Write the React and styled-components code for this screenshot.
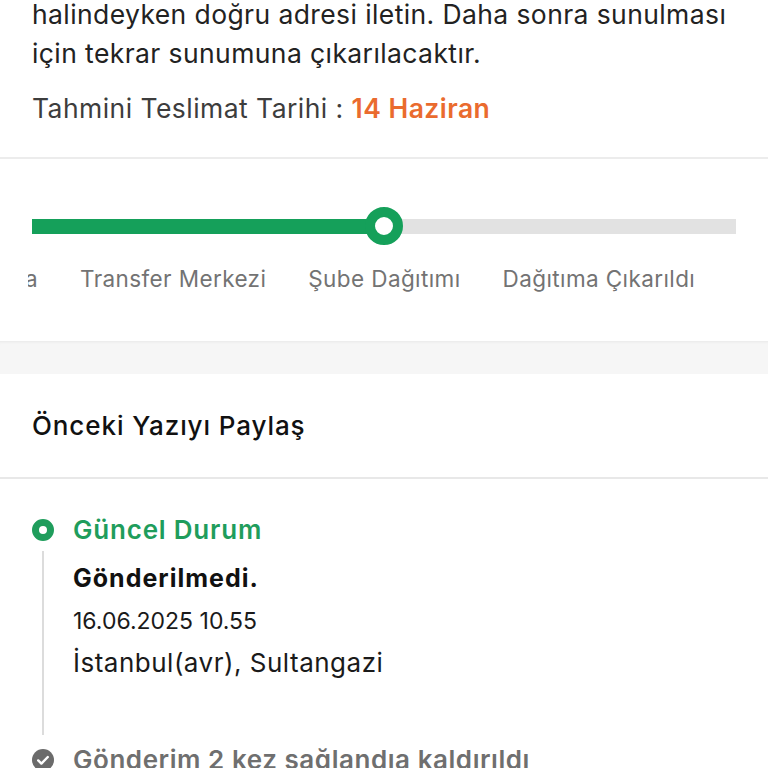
import React from 'react';
import styled, { createGlobalStyle } from 'styled-components';

const GlobalStyle = createGlobalStyle`
    html, body {
        margin: 0;
        padding: 0;
        background: #ffffff;
    }
    body {
        height: 768px;
        font-family: Inter, "Noto Sans", sans-serif;
        overflow: hidden;
    }
`

const Page = styled.div`
    display: flex;
    flex-direction: column;
    width: 768px;
    & > * {
        flex-shrink: 0;
    }
`

const InfoCard = styled.section`
    padding: 0 32px 29px;
    border-bottom: 2px solid #ececec;
`

const Notice = styled.p`
    margin: -5px 0 0;
    font-size: 26.5px;
    line-height: 39px;
    letter-spacing: 0.4px;
    color: #222222;
`

const Estimate = styled.p`
    margin: 16px 0 0;
    font-size: 26.5px;
    line-height: 39px;
    letter-spacing: 0.45px;
    color: #3d3d3d;
`

const EstimateDate = styled.span`
    color: #ea6b2e;
    font-weight: 600;
`

const TrackerCard = styled.section`
    padding: 47px 0 48px;
`

const TrackRow = styled.div`
    display: flex;
    align-items: center;
    height: 40px;
    padding: 0 32px;
`

const Filled = styled.div`
    flex: 0 0 ${p => p.$width}px;
    height: 15px;
    background: #15a05a;
`

const Ring = styled.div`
    flex: 0 0 38px;
    height: 38px;
    margin: 0 -19px;
    box-sizing: border-box;
    border: 10px solid #15a05a;
    border-radius: 50%;
    background: #ffffff;
    z-index: 1;
`

const Rest = styled.div`
    flex: 1;
    height: 15px;
    background: #e2e2e2;
`

const Labels = styled.div`
    display: flex;
    gap: 42px;
    margin: 19px 0 0 28px;
    font-size: 22.5px;
    line-height: 28px;
    letter-spacing: 0.4px;
    color: #737373;
    white-space: nowrap;
`

const StepLabel = styled.span`
    flex: none;
    ${p => p.$clipped && `
        width: 10px;
        overflow: hidden;
        direction: rtl;
    `}
`

const Gap = styled.div`
    height: 33px;
    background: #f6f6f6;
    box-shadow: inset 0 3px 3px -2px rgba(0, 0, 0, 0.06);
`

const HistoryHeader = styled.h2`
    margin: 0;
    padding: 37px 32px 36px;
    border-bottom: 2px solid #e8e8e8;
    font-size: 26px;
    line-height: 30px;
    letter-spacing: 0.9px;
    font-weight: 500;
    color: #111111;
`

const Timeline = styled.div`
    display: flex;
    flex-direction: column;
    padding: 35px 32px 0;
`

const Item = styled.div`
    display: flex;
    gap: 19px;
`

const Rail = styled.div`
    display: flex;
    flex-direction: column;
    align-items: center;
    flex: 0 0 22px;
`

const CurrentDot = styled.div`
    width: 22px;
    height: 22px;
    margin-top: 5px;
    box-sizing: border-box;
    border: 7px solid #1f9d5c;
    border-radius: 50%;
`

const DoneDot = styled.svg`
    width: 22px;
    height: 22px;
    margin-top: 5px;
`

const Line = styled.div`
    flex: 1;
    width: 2px;
    margin: 10px 0 9px;
    background: #dcdcdc;
`

const Body = styled.div`
    display: flex;
    flex-direction: column;
    padding-bottom: ${p => p.$last ? 0 : 66}px;
`

const Status = styled.div`
    font-size: 26px;
    line-height: 32px;
    letter-spacing: ${p => p.$current ? 0.8 : 0.55}px;
    font-weight: 600;
    color: ${p => p.$current ? '#1f9d5c' : '#6f6f6f'};
`

const Title = styled.div`
    margin-top: 17px;
    font-size: 25px;
    line-height: 30px;
    letter-spacing: 1px;
    font-weight: 700;
    color: #111111;
`

const Meta = styled.div`
    margin-top: ${p => p.$space}px;
    font-size: ${p => p.$size}px;
    line-height: 30px;
    letter-spacing: ${p => p.$track || 0}px;
    color: #1a1a1a;
`

const steps = ['Kargo Yolda', 'Transfer Merkezi', 'Şube Dağıtımı', 'Dağıtıma Çıkarıldı'];

export default function App() {
    return <Page>
        <GlobalStyle/>
        <InfoCard>
            <Notice>
                halindeyken doğru adresi iletin. Daha sonra sunulması<br/>
                için tekrar sunumuna çıkarılacaktır.
            </Notice>
            <Estimate>Tahmini Teslimat Tarihi : <EstimateDate>14 Haziran</EstimateDate></Estimate>
        </InfoCard>

        <TrackerCard>
            <TrackRow>
                <Filled $width={352}/>
                <Ring/>
                <Rest/>
            </TrackRow>
            <Labels>
                {steps.map((s, i) => <StepLabel key={s} $clipped={i === 0}>{s}</StepLabel>)}
            </Labels>
        </TrackerCard>

        <Gap/>

        <HistoryHeader>Önceki Yazıyı Paylaş</HistoryHeader>

        <Timeline>
            <Item>
                <Rail>
                    <CurrentDot/>
                    <Line/>
                </Rail>
                <Body>
                    <Status $current>Güncel Durum</Status>
                    <Title>Gönderilmedi.</Title>
                    <Meta $space={13} $size={23}>16.06.2025 10.55</Meta>
                    <Meta $space={12} $size={26} $track={0.5}>İstanbul(avr), Sultangazi</Meta>
                </Body>
            </Item>
            <Item>
                <Rail>
                    <DoneDot viewBox="0 0 22 22">
                        <circle cx="11" cy="11" r="11" fill="#6b6b6b"/>
                        <path d="M6.2 11.4l3.2 3.2 6.4-6.6" fill="none" stroke="#ffffff" strokeWidth="2.4" strokeLinecap="round" strokeLinejoin="round"/>
                    </DoneDot>
                </Rail>
                <Body $last>
                    <Status>Gönderim 2 kez sağlandıa kaldırıldı</Status>
                </Body>
            </Item>
        </Timeline>
    </Page>
}
